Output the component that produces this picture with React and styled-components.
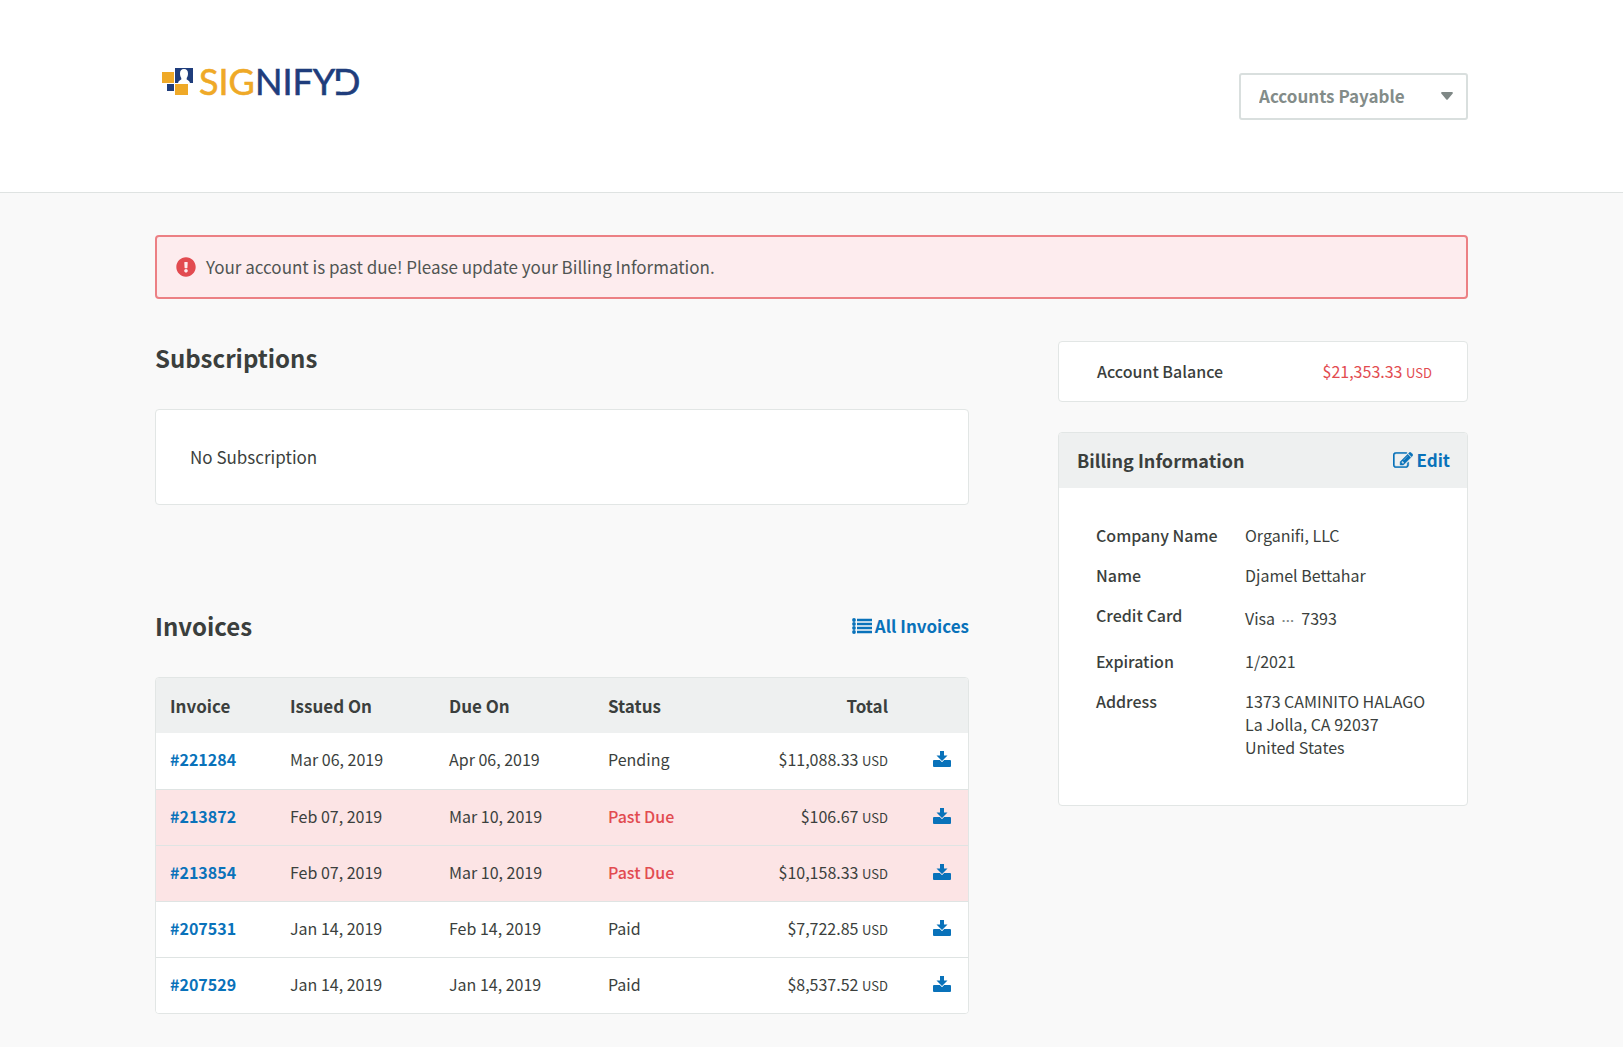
import React, { useState } from "react";
import styled, { createGlobalStyle } from "styled-components";
import { FaExclamationCircle } from "react-icons/fa";

const invoices = [
  { id: "221284", issued: "Mar 06, 2019", due: "Apr 06, 2019", status: "Pending", total: "$11,088.33" },
  { id: "213872", issued: "Feb 07, 2019", due: "Mar 10, 2019", status: "Past Due", total: "$106.67" },
  { id: "213854", issued: "Feb 07, 2019", due: "Mar 10, 2019", status: "Past Due", total: "$10,158.33" },
  { id: "207531", issued: "Jan 14, 2019", due: "Feb 14, 2019", status: "Paid", total: "$7,722.85" },
  { id: "207529", issued: "Jan 14, 2019", due: "Jan 14, 2019", status: "Paid", total: "$8,537.52" },
];

const Logo = () => (
  <svg width="220" height="48" viewBox="0 -8 220 48" role="img" aria-label="Signifyd">
    <rect x="2" y="5" width="12" height="11" fill="#efa927" />
    <rect x="15" y="1" width="18" height="15" fill="#1f3d7c" />
    <path
      d="M24 2c2.700 0 4 1.700 4 4.500 0 2.200-.7 3.600-1.300 4.500v1.600c1.300.6 2.700 1.400 3.300 3.400H18c.6-2 2-2.800 3.300-3.400V11c-.6-.9-1.300-2.300-1.300-4.500C20 3.700 21.300 2 24 2z"
      fill="#fff"
    />
    <rect x="7" y="17" width="7" height="7" fill="#1f3d7c" />
    <rect x="15" y="17" width="13" height="11" fill="#efa927" />
    <g fontFamily="Lato, sans-serif" fontSize="36" strokeWidth="0.6">
      <text x="39" y="28" fill="#1f3d7c" stroke="#1f3d7c">
        <tspan fill="#efa927" stroke="#efa927">SIG</tspan>NIFY
      </text>
      <text x="173" y="28" fill="#1f3d7c" stroke="#1f3d7c">D</text>
    </g>
    {/* the D is open on its lower left side */}
    <rect x="174" y="14" width="8" height="10.500" fill="#fff" />
  </svg>
);

const ListIcon = () => (
  <svg width="20" height="16" viewBox="0 0 20 16" fill="currentColor" aria-hidden="true">
    {[2, 6, 10, 14].map((y) => (
      <g key={y}>
        <circle cx="2" cy={y} r="1.900" />
        <rect x="5" y={y - 1.25} width="15" height="2.500" />
      </g>
    ))}
  </svg>
);

const EditIcon = () => (
  <svg
    width="20"
    height="16"
    viewBox="0 128 1792 1408"
    fill="currentColor"
    stroke="currentColor"
    strokeWidth="40"
    aria-hidden="true"
  >
    <path d="M888 1184l116-116-152-152-116 116v56h96v96h56zm440-720q-16-16-33 1l-350 350q-17 17-1 33t33-1l350-350q17-17 1-33zm80 594v190q0 119-84.500 203.500t-203.500 84.500h-832q-119 0-203.500-84.500t-84.500-203.500v-832q0-119 84.500-203.500t203.500-84.500h832q63 0 117 25 15 7 18 23 3 17-9 29l-49 49q-14 14-32 8-23-6-45-6h-832q-66 0-113 47t-47 113v832q0 66 47 113t113 47h832q66 0 113-47t47-113v-126q0-13 9-22l64-64q15-15 35-7t20 29zm-96-738l288 288-672 672h-288v-288zm444 132l-92 92-288-288 92-92q28-28 68-28t68 28l152 152q28 28 28 68t-28 68z" />
  </svg>
);

const DownloadIcon = () => (
  <svg width="18" height="16" viewBox="0 0 18 16" fill="currentColor" aria-hidden="true">
    <path d="M7 0h4v4.500h3.500L9 10 3.500 4.500H7z" />
    <path d="M1 9h5.800L9 11.200 11.200 9H17a1 1 0 0 1 1 1v5a1 1 0 0 1-1 1H1a1 1 0 0 1-1-1v-5a1 1 0 0 1 1-1z" />
  </svg>
);

const App = () => {
  const [account, setAccount] = useState("Accounts Payable");

  return (
    <>
      <GlobalStyle />
      <Header>
        <HeaderInner>
          <Logo />
          <SelectWrap>
            <Select
              aria-label="Account"
              value={account}
              onChange={(e) => setAccount(e.target.value)}
            >
              <option>Accounts Payable</option>
            </Select>
            <Caret viewBox="0 0 12 8" aria-hidden="true">
              <path d="M1 0h10a1 1 0 0 1 .7 1.600L6.700 7.400a1 1 0 0 1-1.400 0L.3 1.600A1 1 0 0 1 1 0z" />
            </Caret>
          </SelectWrap>
        </HeaderInner>
      </Header>

      <Main>
        <Alert role="alert">
          <FaExclamationCircle size={20} color="#e24b50" />
          Your account is past due! Please update your Billing Information.
        </Alert>

        <Columns>
          <div>
            <Title>Subscriptions</Title>
            <SubscriptionCard>No Subscription</SubscriptionCard>

            <TitleRow>
              <Title>Invoices</Title>
              <IconLink href="#invoices">
                <ListIcon />
                All Invoices
              </IconLink>
            </TitleRow>

            <TableCard>
              <Table>
                <thead>
                  <tr>
                    <Th $width="120px">Invoice</Th>
                    <Th $width="159px">Issued On</Th>
                    <Th $width="159px">Due On</Th>
                    <Th $width="120px">Status</Th>
                    <Th $right>Total</Th>
                    <Th $width="80px" aria-label="Download" />
                  </tr>
                </thead>
                <tbody>
                  {invoices.map((inv) => {
                    const late = inv.status === "Past Due";
                    return (
                      <Row key={inv.id} $late={late}>
                        <Td>
                          <InvoiceLink href={`#${inv.id}`}>#{inv.id}</InvoiceLink>
                        </Td>
                        <Td>{inv.issued}</Td>
                        <Td>{inv.due}</Td>
                        <Td>{late ? <Late>{inv.status}</Late> : inv.status}</Td>
                        <Td $right>
                          {inv.total} <Currency>USD</Currency>
                        </Td>
                        <Td>
                          <DownloadButton type="button" aria-label={`Download ${inv.id}`}>
                            <DownloadIcon />
                          </DownloadButton>
                        </Td>
                      </Row>
                    );
                  })}
                </tbody>
              </Table>
            </TableCard>
          </div>

          <Side>
            <BalanceCard>
              <strong>Account Balance</strong>
              <Balance>
                $21,353.33 <Currency>USD</Currency>
              </Balance>
            </BalanceCard>

            <Card>
              <CardHeader>
                <CardTitle>Billing Information</CardTitle>
                <IconLink href="#edit">
                  <EditIcon />
                  Edit
                </IconLink>
              </CardHeader>
              <Details>
                <dt>Company Name</dt>
                <dd>Organifi, LLC</dd>
                <dt>Name</dt>
                <dd>Djamel Bettahar</dd>
                <dt>Credit Card</dt>
                <CardNumber>
                  Visa <Dots>···</Dots> 7393
                </CardNumber>
                <dt>Expiration</dt>
                <dd>1/2021</dd>
                <dt>Address</dt>
                <dd>
                  1373 CAMINITO HALAGO
                  <br />
                  La Jolla, CA 92037
                  <br />
                  United States
                </dd>
              </Details>
            </Card>
          </Side>
        </Columns>
      </Main>
    </>
  );
};

export default App;

const GlobalStyle = createGlobalStyle`
  * {
    box-sizing: border-box;
  }

  body {
    margin: 0;
    background: #f9f9f9;
    color: #3b3f3d;
    font-family: "Noto Sans CJK SC", "Noto Sans", sans-serif;
    font-size: 16px;
    line-height: 24px;
  }

  strong, dt {
    font-weight: 500;
  }
`;

const Header = styled.header`
  background: #fff;
  border-bottom: 1px solid #dfe3e2;
`;

const HeaderInner = styled.div`
  display: flex;
  justify-content: space-between;
  align-items: flex-start;
  max-width: 1361px;
  margin: 0 auto;
  padding: 59px 24px 58px 29px;
`;

const SelectWrap = styled.div`
  position: relative;
  width: 229px;
  margin: 14px 0;
`;

const Select = styled.select`
  display: block;
  appearance: none;
  width: 100%;
  height: 47px;
  padding: 0 40px 2px 18px;
  border: 2px solid #d9dfde;
  border-radius: 3px;
  background: #fff;
  color: #838c89;
  font: inherit;
  font-size: 17px;
  font-weight: 700;
`;

const Caret = styled.svg`
  position: absolute;
  top: 19px;
  right: 15px;
  width: 12px;
  height: 8px;
  fill: #7f8886;
  pointer-events: none;
`;

const Main = styled.main`
  max-width: 1361px;
  margin: 0 auto;
  padding: 42px 24px 32px;
`;

const Alert = styled.div`
  display: flex;
  align-items: center;
  gap: 10px;
  padding: 18px 19px;
  border: 2px solid #ec8084;
  border-radius: 4px;
  background: #fdecee;
  color: #505553;
  font-size: 17px;
`;

const Columns = styled.div`
  display: grid;
  grid-template-columns: minmax(0, 814fr) minmax(0, 410fr);
  gap: 89px;
  margin-top: 42px;
`;

const Title = styled.h2`
  margin: 0;
  font-size: 24px;
  font-weight: 700;
  line-height: 34px;
`;

const Card = styled.section`
  overflow: hidden;
  border: 1px solid #e2e6e5;
  border-radius: 4px;
  background: #fff;
`;

const SubscriptionCard = styled(Card)`
  margin-top: 34px;
  padding: 35px 34px;
  font-size: 17px;
`;

const TitleRow = styled.div`
  display: flex;
  justify-content: space-between;
  align-items: center;
  margin-top: 104px;
`;

const IconLink = styled.a`
  display: flex;
  align-items: center;
  gap: 3px;
  color: #0972ba;
  font-size: 17px;
  font-weight: 700;
  text-decoration: none;
`;

const TableCard = styled(Card)`
  margin-top: 34px;
`;

const Table = styled.table`
  width: 100%;
  table-layout: fixed;
  border-collapse: collapse;
`;

const Th = styled.th`
  width: ${(p) => p.$width || "auto"};
  height: 55px;
  padding: 0 0 0 14px;
  background: #eef0f0;
  font-size: 17px;
  font-weight: 700;
  text-align: ${(p) => (p.$right ? "right" : "left")};
`;

const Row = styled.tr`
  background: ${(p) => (p.$late ? "#fce4e5" : "#fff")};

  & + & {
    border-top: 1px solid #dfe4e3;
  }
`;

const Td = styled.td`
  height: 56px;
  padding: 0 0 3px 14px;
  text-align: ${(p) => (p.$right ? "right" : "left")};
`;

const InvoiceLink = styled.a`
  color: #0972ba;
  font-weight: 700;
  text-decoration: none;
`;

const Late = styled.strong`
  color: #e24b50;
`;

const Currency = styled.small`
  font-size: 13px;
  line-height: 1;
`;

const DownloadButton = styled.button`
  display: block;
  margin-left: 31px;
  padding: 0;
  border: 0;
  background: none;
  color: #0972ba;
  cursor: pointer;

  svg {
    display: block;
  }
`;

const Side = styled.aside`
  display: flex;
  flex-direction: column;
  gap: 30px;
`;

const BalanceCard = styled(Card)`
  display: flex;
  justify-content: space-between;
  padding: 17px 35px 18px 38px;
`;

const Balance = styled.span`
  color: #e24b50;
`;

const CardHeader = styled.div`
  display: flex;
  justify-content: space-between;
  align-items: center;
  height: 55px;
  padding: 0 17px 2px 18px;
  background: #eef0f0;
`;

const CardTitle = styled.h3`
  margin: 0;
  font-size: 18px;
  font-weight: 700;
`;

const Details = styled.dl`
  display: grid;
  grid-template-columns: 133px 1fr;
  gap: 17px 16px;
  margin: 0;
  padding: 36px 32px 46px 37px;
  line-height: 23px;

  dd {
    margin: 0;
  }
`;

const CardNumber = styled.dd`
  padding: 3px 0;
`;

const Dots = styled.span`
  margin: 0 3px;
  color: #7f8886;
  font-family: "Liberation Sans", sans-serif;
  font-size: 13px;
  font-weight: 700;
  line-height: 1;
`;
